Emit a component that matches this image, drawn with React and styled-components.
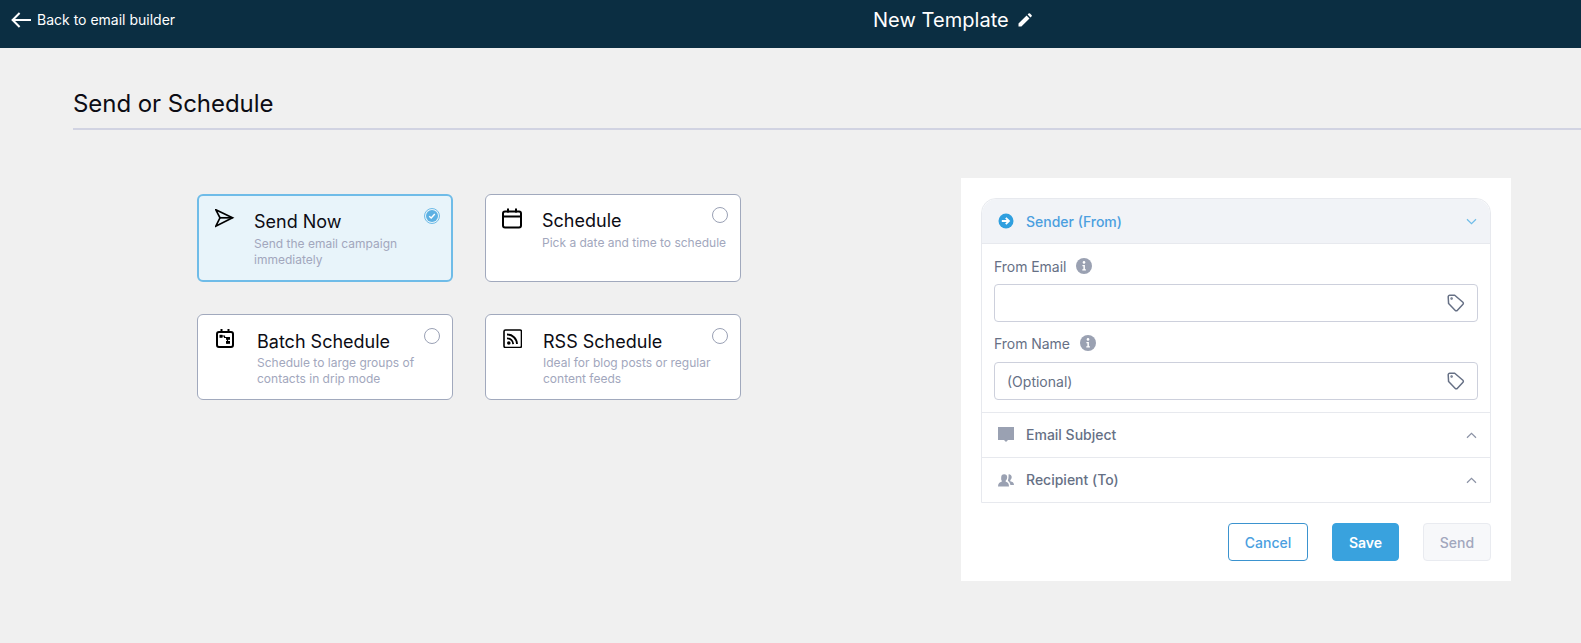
import React from "react";
import styled, { createGlobalStyle } from "styled-components";

const GlobalStyle = createGlobalStyle`
  html, body {
    margin: 0;
    padding: 0;
    background: #f0f0f0;
    font-family: Inter, "Liberation Sans", sans-serif;
  }
  * { box-sizing: border-box; }
`;

const Page = styled.div`
  width: 1581px;
  height: 643px;
  overflow: hidden;
`;

const TopBar = styled.header`
  height: 48px;
  background: #0b2e42;
  color: #fff;
  display: flex;
  align-items: center;
  padding-left: 11px;
`;

const BackLink = styled.a`
  display: flex;
  align-items: center;
  gap: 6px;
  width: 862px;
  font-size: 14px;
  font-weight: 400;
  padding-bottom: 9px;
`;

const TitleWrap = styled.div`
  display: flex;
  align-items: center;
  gap: 9px;
  font-size: 20px;
  font-weight: 400;
  letter-spacing: 0.05px;
  padding-bottom: 9px;
`;

const Content = styled.main`
  padding-left: 73px;
`;

const Heading = styled.h1`
  margin: 0;
  height: 82px;
  padding-top: 40px;
  font-size: 24px;
  line-height: 32px;
  font-weight: 400;
  letter-spacing: -0.05px;
  color: #0c0c14;
  border-bottom: 2px solid #d1d3e2;
`;

const Body = styled.div`
  display: flex;
  align-items: flex-start;
  padding: 48px 0 0 124px;
`;

const CardGrid = styled.div`
  display: grid;
  grid-template-columns: 256px 256px;
  grid-template-rows: 88px 86px;
  gap: 32px;
  margin-top: 16px;
`;

const Card = styled.div`
  display: flex;
  align-items: flex-start;
  padding: 13px 12px 0 16px;
  border-radius: 6px;
  background: ${(p) => (p.$active ? "#e8f4fa" : "#fff")};
  border: ${(p) => (p.$active ? "2px solid #6fbce8" : "1px solid #a1a9bd")};
`;

const CardIcon = styled.div`
  width: ${(p) => p.$w}px;
  flex: none;
  color: #000;
  display: flex;
`;

const CardText = styled.div`
  flex: 1;
  min-width: 0;
`;

const CardTitle = styled.div`
  font-size: 18px;
  line-height: 24px;
  color: #0c0c14;
  margin-top: ${(p) => p.$top}px;
`;

const CardDesc = styled.div`
  font-size: 12px;
  line-height: 16px;
  color: #a2a7bd;
  margin-top: ${(p) => p.$gap}px;
  white-space: pre;
`;

const Radio = styled.span`
  flex: none;
  width: 16px;
  height: 16px;
  margin-top: ${(p) => p.$top}px;
  border-radius: 50%;
  border: 1px solid #9aa1b5;
  background: #fff;
`;

const RadioOn = styled.span`
  flex: none;
  width: 16px;
  height: 16px;
  margin-top: -1px;
  margin-right: -1px;
  border-radius: 50%;
  border: 1px solid #6fbce8;
  background: #e8f4fa;
  display: flex;
  align-items: center;
  justify-content: center;
`;

const RadioDot = styled.span`
  width: 12px;
  height: 12px;
  border-radius: 50%;
  background: #5db1e3;
  display: flex;
  align-items: center;
  justify-content: center;
`;

const Panel = styled.aside`
  width: 550px;
  height: 403px;
  margin-left: 220px;
  background: #fff;
  padding: 20px;
  display: flex;
  flex-direction: column;
`;

const Accordion = styled.div`
  border: 1px solid #e7e9ee;
  border-top-left-radius: 15px;
  border-top-right-radius: 15px;
`;

const SectionHead = styled.div`
  display: flex;
  align-items: center;
  height: ${(p) => p.$h}px;
  padding: 0 13px 0 16px;
  font-size: 14px;
  font-weight: 500;
  color: ${(p) => (p.$open ? "#4b9fdf" : "#667085")};
  background: ${(p) => (p.$open ? "#f1f3f7" : "#fff")};
  border-top: ${(p) => (p.$open ? "none" : "1px solid #e7e9ee")};
  border-bottom: ${(p) => (p.$open ? "1px solid #e7e9ee" : "none")};
  border-radius: ${(p) => (p.$open ? "15px 15px 0 0" : "0")};
`;

const HeadIcon = styled.span`
  width: 28px;
  flex: none;
  display: flex;
`;

const HeadLabel = styled.span`
  flex: 1;
  padding-bottom: ${(p) => (p.$open ? 0 : 1)}px;
`;

const Fields = styled.div`
  padding: 14px 12px 12px;
`;

const FieldLabel = styled.div`
  display: flex;
  align-items: center;
  gap: 10px;
  height: 16px;
  font-size: 14px;
  letter-spacing: -0.05px;
  color: #667085;
  margin-bottom: ${(p) => p.$mb}px;
`;

const InputBox = styled.div`
  display: flex;
  align-items: center;
  justify-content: space-between;
  height: 38px;
  padding: 0 12px;
  border: 1px solid #cdd0dc;
  border-radius: 4px;
  font-size: 14px;
  color: #667085;
  margin-bottom: ${(p) => p.$mb || 0}px;
`;

const Actions = styled.div`
  display: flex;
  justify-content: flex-end;
  gap: 24px;
  margin-top: 20px;
`;

const Button = styled.button`
  height: 38px;
  width: ${(p) => p.$w}px;
  border-radius: 4px;
  font-family: inherit;
  font-size: 14px;
  font-weight: ${(p) => (p.$kind === "save" ? 600 : 500)};
  padding: 0;
  color: ${(p) =>
    p.$kind === "save" ? "#fff" : p.$kind === "cancel" ? "#4b9fdf" : "#a2a7bd"};
  background: ${(p) =>
    p.$kind === "save" ? "#39a2de" : p.$kind === "cancel" ? "#fff" : "#f7f8fa"};
  border: 1px solid
    ${(p) =>
      p.$kind === "save" ? "#39a2de" : p.$kind === "cancel" ? "#3b93cf" : "#e9ebf0"};
`;

const ArrowLeft = () => (
  <svg width="20" height="16" viewBox="0 0 20 16" fill="none" stroke="#fff" strokeWidth="2">
    <path d="M20 8H1.800M8.600 1 1.600 8l7 7" />
  </svg>
);

const Pencil = () => (
  <svg width="14" height="14" viewBox="0 0 14 14" fill="#fff">
    <path d="M0.5 13.5V10.6L8.6 2.5l2.9 2.9-8.1 8.1zM9.6 1.5l1-1a1 1 0 0 1 1.4 0l1.500 1.500a1 1 0 0 1 0 1.400l-1 1z" />
  </svg>
);

const SendIcon = () => (
  <svg width="20" height="20" viewBox="0 0 20 20" fill="none" stroke="#000" strokeWidth="1.7">
    <path d="M0.800 0.800 17.500 8.800 0.800 17.200 5 8.800z" />
    <path d="M5 8.800H17.500" />
  </svg>
);

const CalendarIcon = () => (
  <svg width="21" height="21" viewBox="0 0 21 21" fill="none" stroke="#000" strokeWidth="2">
    <rect x="1" y="3.500" width="18" height="16" rx="2" />
    <path d="M1 8.500h18M6 0.500v4M14 0.500v4" />
  </svg>
);

const BatchIcon = () => (
  <svg width="20" height="20" viewBox="-2 -1 20 20" fill="none" stroke="#000" strokeWidth="2">
    <rect x="1" y="3" width="16" height="15" rx="2" />
    <path d="M5.500 0v4M12.500 0v4" />
    <path d="M5 7h3.500v1.500h3M11.500 8.500v6" strokeWidth="1.200" />
    <rect x="3.500" y="5.800" width="3" height="3" fill="#000" strokeWidth="0" />
    <rect x="10" y="8" width="4" height="2.800" fill="#000" strokeWidth="0" />
    <rect x="10" y="12" width="4" height="2.800" fill="#000" strokeWidth="0" />
  </svg>
);

const RssIcon = () => (
  <svg width="20" height="20" viewBox="-1 -1 20 20" fill="none" stroke="#000">
    <rect x="1" y="1" width="17.500" height="17.500" rx="1.500" strokeWidth="1.600" />
    <circle cx="5.800" cy="14" r="1.800" fill="#000" stroke="none" />
    <path d="M4 9.300a6 6 0 0 1 6.200 5.800" strokeWidth="1.800" />
    <path d="M4 5.500a9.800 9.800 0 0 1 10 9.600" strokeWidth="1.800" />
  </svg>
);

const Check = () => (
  <svg width="8" height="8" viewBox="0 0 8 8" fill="none" stroke="#fff" strokeWidth="1.400">
    <path d="M1.200 4.200 3.200 6 6.800 2" />
  </svg>
);

const ArrowCircle = () => (
  <svg width="16" height="16" viewBox="0 0 16 16">
    <circle cx="8" cy="8" r="7.500" fill="#2f9fdf" />
    <path d="M3.800 8h7M7.800 4.800 11 8l-3.200 3.200" fill="none" stroke="#fff" strokeWidth="1.800" />
  </svg>
);

const Info = () => (
  <svg width="16" height="16" viewBox="0 0 16 16">
    <circle cx="8" cy="8" r="8" fill="#9aa1b2" />
    <circle cx="8" cy="4.400" r="1.300" fill="#fff" />
    <path d="M6.400 7h2.500v4.200h1v1.200H6.300v-1.200h1.100V8.200h-1z" fill="#fff" />
  </svg>
);

const Tag = () => (
  <svg width="18" height="18" viewBox="0 0 18 18" fill="none" stroke="#667085" strokeWidth="1.500">
    <path d="M1.200 2.800a1.500 1.500 0 0 1 1.500-1.500h5l8.200 7a1.300 1.300 0 0 1 .1 1.900l-5.800 6.200a1.300 1.300 0 0 1-1.900.1L1.600 9.600z" strokeLinejoin="round" />
    <circle cx="4.600" cy="4.600" r="0.500" />
  </svg>
);

const Chevron = ({ up, color }) => (
  <svg width="11" height="7" viewBox="0 0 11 7" fill="none" stroke={color} strokeWidth="1.200">
    <path d={up ? "M1 5.800 5.500 1.400 10 5.800" : "M1 1.200 5.500 5.600 10 1.200"} />
  </svg>
);

const Bubble = () => (
  <svg width="16" height="16" viewBox="0 0 16 16" fill="#9aa1b2">
    <path d="M0 0h16v13h-6l-2 2-2-2H0z" />
  </svg>
);

const People = () => (
  <svg width="16" height="13" viewBox="0 0 16 13" fill="#9aa1b2">
    <path d="M3.200 3.200a3 3 0 0 1 6 0c0 1.500-.7 2.700-1.500 3.300v1.200c2 .4 3.300 1.500 3.300 4.800H0c0-3.300 1.700-4.400 3.700-4.800V6.500C3 5.900 3.200 4.700 3.200 3.200z" />
    <path d="M10.500.4a2.700 2.700 0 0 1 3.200 2.700c0 1.400-.6 2.500-1.400 3v1.100c2 .4 3.700 1.300 3.700 3.800h-3.600c-.3-2-1.300-3.200-2.400-3.900V5.800c.5-1 .7-3.600.5-5.400z" />
  </svg>
);

const cards = [
  { title: "Send Now", desc: "Send the email campaign\nimmediately", icon: <SendIcon />, w: 39, top: 1, gap: 2, radioTop: 0, active: true },
  { title: "Schedule", desc: "Pick a date and time to schedule", icon: <CalendarIcon />, w: 40, top: 1, gap: 2, radioTop: -1 },
  { title: "Batch Schedule", desc: "Schedule to large groups of\ncontacts in drip mode", icon: <BatchIcon />, w: 43, top: 2, gap: 1, radioTop: 0 },
  { title: "RSS Schedule", desc: "Ideal for blog posts or regular\ncontent feeds", icon: <RssIcon />, w: 41, top: 2, gap: 1, radioTop: 0 },
];

export default function App() {
  return (
    <Page>
      <GlobalStyle />
      <TopBar>
        <BackLink>
          <ArrowLeft />
          Back to email builder
        </BackLink>
        <TitleWrap>
          New Template
          <Pencil />
        </TitleWrap>
      </TopBar>
      <Content>
        <Heading>Send or Schedule</Heading>
        <Body>
          <CardGrid>
            {cards.map((c) => (
              <Card key={c.title} $active={c.active}>
                <CardIcon $w={c.w}>{c.icon}</CardIcon>
                <CardText>
                  <CardTitle $top={c.top}>{c.title}</CardTitle>
                  <CardDesc $gap={c.gap}>{c.desc}</CardDesc>
                </CardText>
                {c.active ? (
                  <RadioOn>
                    <RadioDot>
                      <Check />
                    </RadioDot>
                  </RadioOn>
                ) : (
                  <Radio $top={c.radioTop} />
                )}
              </Card>
            ))}
          </CardGrid>
          <Panel>
            <Accordion>
              <SectionHead $open $h={45}>
                <HeadIcon>
                  <ArrowCircle />
                </HeadIcon>
                <HeadLabel $open>Sender (From)</HeadLabel>
                <Chevron color="#6fbce8" />
              </SectionHead>
              <Fields>
                <FieldLabel $mb={10}>
                  From Email
                  <Info />
                </FieldLabel>
                <InputBox $mb={13}>
                  <span />
                  <Tag />
                </InputBox>
                <FieldLabel $mb={11}>
                  From Name
                  <Info />
                </FieldLabel>
                <InputBox>
                  (Optional)
                  <Tag />
                </InputBox>
              </Fields>
              <SectionHead $h={45}>
                <HeadIcon>
                  <Bubble />
                </HeadIcon>
                <HeadLabel>Email Subject</HeadLabel>
                <Chevron up color="#8b92a5" />
              </SectionHead>
              <SectionHead $h={45}>
                <HeadIcon>
                  <People />
                </HeadIcon>
                <HeadLabel>Recipient (To)</HeadLabel>
                <Chevron up color="#8b92a5" />
              </SectionHead>
            </Accordion>
            <Actions>
              <Button $kind="cancel" $w={80}>Cancel</Button>
              <Button $kind="save" $w={67}>Save</Button>
              <Button $kind="send" $w={68}>Send</Button>
            </Actions>
          </Panel>
        </Body>
      </Content>
    </Page>
  );
}
